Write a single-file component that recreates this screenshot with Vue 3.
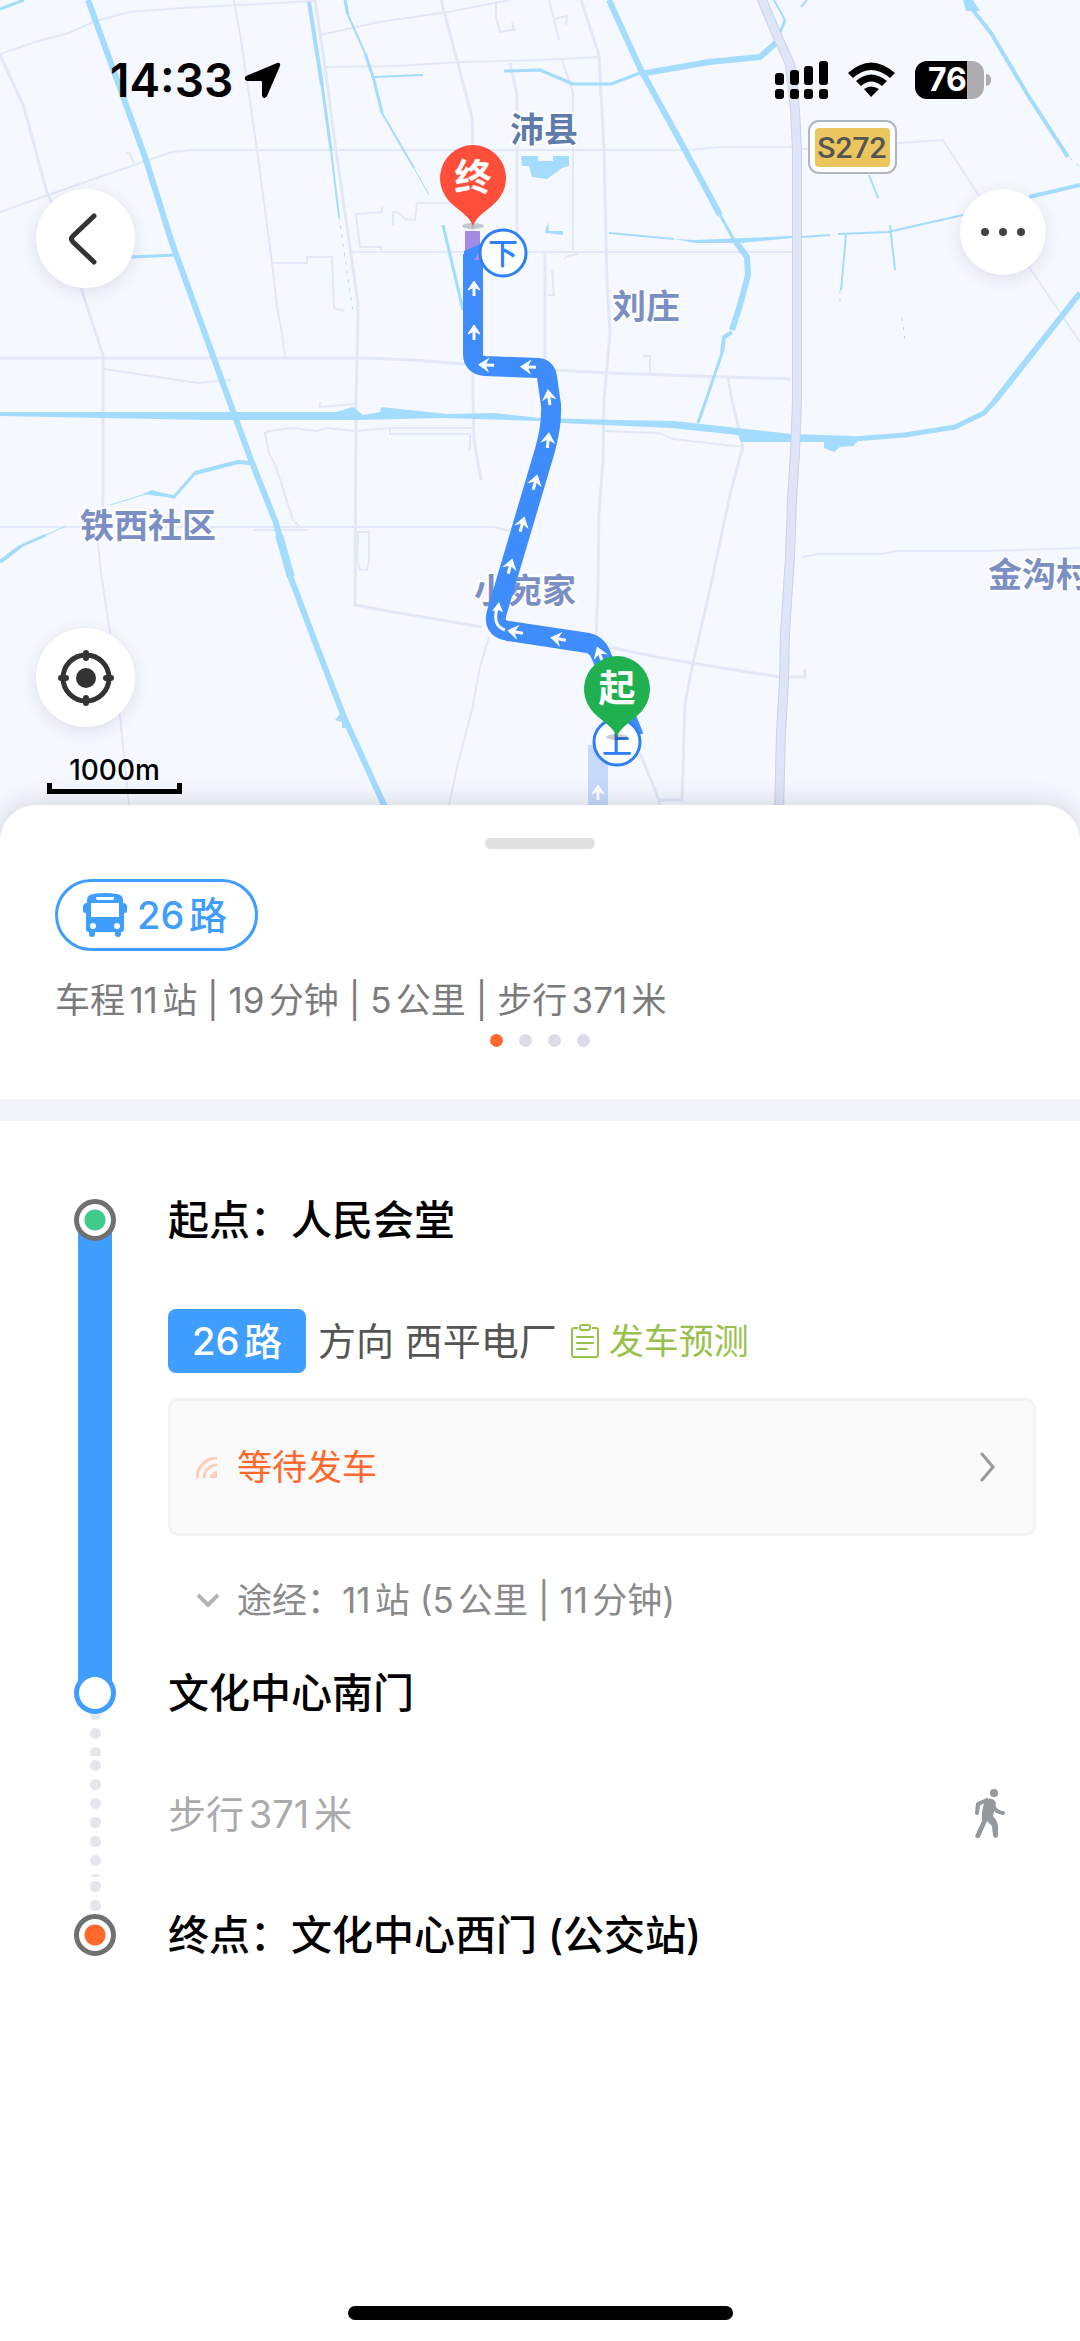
<script setup>
const roads = [
  'M0 54 38 41 69 33 93 22 129 12 182 8 241 5 315 1',
  'M0 212 48 195 134 165 172 152 193 150H688L719 147H792M802 149 898 143 943 140 977 193 1029 267 1080 342',
  'M234 0 241 40 257 150 272 263 277 307 282 333 285 358',
  'M320 35 379 22 448 12 510 0',
  'M325 67 396 66 461 62 540 60 600 57',
  'M351 252H792',
  'M393 225V212L399 213 405 219 415 220 417 203H455',
  'M382 207V212L356 214 360 247H381V250',
  'M272 263H307V257H332L334 308 344 311',
  'M104 369 198 383 231 380',
  'M126 153H129L134 163',
  'M496 3V17L500 32 514 30 512 22',
  'M562 60 573 93V250',
  'M549 0 554 20 559 40M554 19 567 16 566 25',
  'M643 356H650V375',
  'M602 431 659 433 673 439 743 447',
  'M803 557 819 554H881L898 551H988L1080 548',
  'M564 259 568 256 579 254M552 270 554 295H548',
  'M0 527H494L510 531M253 530H308',
  'M355 431 327 428 317 431 293 428 269 431 265 433 269 453 276 467 293 520 300 527',
  'M355 431 390 428H474M390 428V434H470V448L468 450',
  'M320 402V407L356 404',
  'M358 532H369V560L367 570H360L357 560Z',
  'M489 637 480 667 472 710 458 763 449 805V850',
  'M98 543 101 573 110 633 120 717 129 805V850',
]
const wideRoads = [
  'M0 55 24 107 47 193 52 203 81 288 103 355V467L103 500 98 543',
  'M0 358H365L413 360 465 364M555 370 609 373 726 377 791 379',
  'M315 0 325 67 336 150 358 303 358 320 356 400 356 428 355 605 399 613 441 620 482 627',
  'M441 0 455 53 472 117 473 150V400L474 440 481 480',
  'M510 63 517 95V251',
  'M581 0 599 55 604 150 607 283 610 333 604 400 603 460 599 510 598 593 596 637',
  'M545 252V360',
  'M728 378 732 400 743 447 731 490 712 580 693 663 685 703 682 800H659M640 753 659 800 664 850',
  'M609 647 657 657 692 663 747 672 781 677H805V669',
]
const water = [
  { w: 6, d: 'M88 0 145 157 172 243 229 400 251 460 276 523 289 573 317 647 344 717 384 805 400 850' },
  { w: 8, d: 'M279 535 291 577' },
  { w: 3, d: 'M0 9 24 0' },
  { w: 4, d: 'M309 2 322 85' },
  { w: 3, d: 'M322 85 331 150' },
  { w: 2, d: 'M331 150 339 217' },
  { w: 3, d: 'M345 0 348 15M365 53 374 80 382 113' },
  { w: 2, d: 'M348 15 365 53M374 77 423 75M382 113 414 168' },
  { w: 1, d: 'M414 168 429 195' },
  { w: 3, d: 'M131 257 177 255' },
  { w: 3, d: 'M443 225 463 310' },
  { w: 3, d: 'M504 71 540 70 573 84 611 84 640 73M776 43 785 20' },
  { w: 6, d: 'M640 74 709 62 760 57 776 43' },
  { w: 2, d: 'M785 20 774 0M807 0 801 7' },
  { w: 6, d: 'M609 0 640 68 685 150 720 215' },
  { w: 3, d: 'M720 215 734 240 746 257' },
  { w: 6, d: 'M736 242 747 257 748 275 740 305 732 330' },
  { w: 4, d: 'M732 332 724 337 722 353' },
  { w: 3, d: 'M722 353 706 400 698 423' },
  { w: 2, d: 'M609 233 674 239M802 237 830 235M838 234 888 232 963 215' },
  { w: 4, d: 'M1029 197 1080 185' },
  { w: 2, d: 'M846 235 841 290M890 225 895 270M869 175 878 198' },
  { w: 4, d: 'M965 0 991 33 1029 97 1068 157' },
  { w: 6, d: 'M1080 293 994 402' },
  { w: 5, d: 'M994 402 984 413 955 427 905 435 853 439' },
  { w: 4, d: 'M250 463 238 462 195 473M0 562 21 546' },
  { w: 3, d: 'M195 473 174 497 152 492M21 546 46 535' },
  { w: 1, d: 'M152 492 110 505M46 535 66 526' },
]
const lakes = [
  '521,156 538,156 538,161 553,161 553,156 569,156 569,166 562,168 547,179 532,177 529,166 522,166',
  '545,232 548,222 549,231 563,231 563,235 545,233',
  '343,710 335,720 342,722 342,728 352,728',
  '963,0 973,0 980,11 966,11',
  '674,239 695,240 792,236 792,238 740,243 695,243',
  '0,412 336,412 353,407 363,415 380,412 381,407 447,414 494,413 540,418 617,420 674,421 791,434 853,436 858,441 853,446 840,447 834,452 824,448 824,442 741,442 738,435 671,428 561,423 540,421 444,418 356,420 207,420 0,416',
  '174,498 150,495 143,494 152,490',
]
const places = [
  { name: '沛县', x: 510, y: 142, main: true },
  { name: '刘庄', x: 612, y: 319 },
  { name: '铁西社区', x: 80, y: 538 },
  { name: '小宛家', x: 474, y: 603 },
  { name: '金沟村', x: 988, y: 587 },
]
const arrows = [
  [474, 289, 0], [474, 333, 0], [487, 365, -88], [529, 367, -88], [549, 398, -8], [548, 441, 6],
  [535, 483, 15], [522, 525, 15], [510, 567, 15], [516, 632, -80], [559, 639, -80], [600, 655, -20], [598, 793, 0],
]
const pages = [0, 1, 2, 3]
</script>

<template>
  <main class="screen">
    <section class="map">
      <svg class="canvas" viewBox="0 0 1080 841" preserveAspectRatio="xMidYMin slice" aria-label="路线地图">
        <g class="road"><path v-for="d in roads" :key="d" :d="d" /></g>
        <g class="road wide"><path v-for="d in wideRoads" :key="d" :d="d" /></g>
        <g class="water">
          <path v-for="s in water" :key="s.d" :d="s.d" :stroke-width="s.w" />
          <path d="M339 217 353 312M902 318 905 340M840 290V302M1070 158 1080 167" stroke-dasharray="3 6" />
        </g>
        <polygon v-for="p in lakes" :key="p" class="lake" :points="p" />
        <path class="highway-edge" d="M760 -5 776 33 790 64 795 110 797 150V400L795 453 792 500 790 557 785 633 784 680 781 733 778 850" />
        <path class="highway" d="M760 -5 776 33 790 64 795 110 797 150V400L795 453 792 500 790 557 785 633 784 680 781 733 778 850" />

        <g class="sign">
          <rect x="809" y="121" width="87" height="52" rx="10" fill="#fff" stroke="#aeb6bf" stroke-width="2" />
          <rect x="815" y="128" width="75" height="39" rx="4" fill="#ebc65f" />
          <text x="852" y="158" text-anchor="middle">S272</text>
        </g>
        <text v-for="p in places" :key="p.name" class="place" :class="{ main: p.main }" :x="p.x" :y="p.y">{{ p.name }}</text>

        <path d="M598 745V850" stroke="#c5dafd" stroke-width="20" fill="none" />
        <rect x="465" y="231" width="15" height="24" fill="#a48ae6" />
        <path class="route" d="M473 254V354Q473 365 485 366L538 368Q546 369 547 377L551 405Q552 425 545 450L497 612Q492 628 508 631L588 643Q597 645 601 655L634 737" />
        <path d="M464 255V251L480 244 483 247V255Z" fill="#3f8cfd" />
        <path d="M480 250 482 260H474Z" fill="#a48ae6" />
        <g v-for="a in arrows" :key="a.join()" class="arrow" :transform="`translate(${a[0]} ${a[1]}) rotate(${a[2]})`">
          <path d="M0 7V-3" /><path class="head" d="M0 -8 6 1 0 -2 -6 1Z" />
        </g>
        <path class="bend" d="M505 630C496 627 494 619 497 608" />
        <path d="M499 602 503 612 498 610 492 611Z" fill="#fff" />

        <g class="stop">
          <circle cx="503" cy="253" r="23" /><text x="503" y="264">下</text>
          <circle cx="617" cy="742" r="23" /><text x="617" y="753">上</text>
        </g>
        <g class="pin">
          <ellipse cx="473" cy="226" rx="11" ry="3" />
          <path d="M473 226C469 214 453 208 446 197A33 33 0 1 1 500 197C493 208 477 214 473 226Z" fill="#ff4f3a" />
          <text x="473" y="191">终</text>
          <ellipse cx="617" cy="737" rx="11" ry="3" />
          <path d="M617 737C613 725 597 719 590 708A33 33 0 1 1 644 708C637 719 621 725 617 737Z" fill="#20b050" />
          <text x="617" y="702">起</text>
        </g>
      </svg>

      <div class="overlay">
        <div class="status">
          <time>14:33</time>
          <svg class="location" width="37" height="37" viewBox="0 0 37 37"><path d="M33 1Q37 0 36 4L23 34Q20 38 18 34V20Q18 19 17 19H3Q-1 17 2 14Z" /></svg>
          <svg class="signal" width="53" height="38" viewBox="0 0 53 38">
            <rect y="12" width="9" height="12" rx="3" /><rect x="15" y="9" width="9" height="15" rx="3" /><rect x="29" y="5" width="9" height="19" rx="3" /><rect x="44" width="9" height="24" rx="3" />
            <rect y="28" width="9" height="10" rx="3" /><rect x="15" y="28" width="9" height="10" rx="3" /><rect x="29" y="28" width="9" height="10" rx="3" /><rect x="44" y="28" width="9" height="10" rx="3" />
          </svg>
          <svg class="wifi" width="47" height="36" viewBox="0 0 47 36">
            <path d="M0 11Q23 -10 47 11L42 16Q23 0 5 16Z" /><path d="M8 19Q23 6 39 19L34 24Q23 15 13 24Z" /><path d="M16 27Q23 22 31 27L23 35Z" />
          </svg>
          <span class="battery"><span class="level">76</span></span>
          <span class="nub"></span>
        </div>

        <nav class="nav">
          <button class="round" type="button" aria-label="返回">
            <svg width="36" height="54" viewBox="0 0 36 54"><path d="M26 4 5 24Q2 27 5 30L26 50" fill="none" stroke="#333" stroke-width="5" stroke-linecap="round" /></svg>
          </button>
          <button class="round more" type="button" aria-label="更多">
            <svg width="46" height="10" viewBox="0 0 46 10" fill="#444"><circle cx="5" cy="5" r="4" /><circle cx="23" cy="5" r="4" /><circle cx="41" cy="5" r="4" /></svg>
          </button>
        </nav>

        <div class="tools">
          <button class="round" type="button" aria-label="定位">
            <svg width="56" height="56" viewBox="0 0 56 56">
              <circle cx="28" cy="28" r="23" fill="none" stroke="#333" stroke-width="5" /><circle cx="28" cy="28" r="10" fill="#333" />
              <path d="M28 3V8M28 48V53M3 28H8M48 28H53" stroke="#333" stroke-width="6" stroke-linecap="round" />
            </svg>
          </button>
          <div class="scale">1000m<span class="ruler"></span></div>
        </div>
      </div>
    </section>

    <section class="sheet">
      <header class="summary">
        <span class="handle"></span>
        <div class="pill">
          <svg width="44" height="44" viewBox="0 0 44 44">
            <path fill="#3f9eff" fill-rule="evenodd" d="M10 1Q22 -1 34 1Q40 2 40 7V10Q44 10 44 14V18Q44 20 41 20V36Q41 39 38 39V41Q38 44 35 44T32 41V39H12V41Q12 44 9 44T6 41V39Q3 39 3 36V20Q0 20 0 18V14Q0 10 4 10V7Q4 2 10 1ZM14 4Q13 4 13 5T14 7H30Q31 7 31 5T30 4ZM8 10V24H36V10ZM10 30A3 3 0 0 0 10 36A3 3 0 0 0 10 30ZM34 30A3 3 0 0 0 34 36A3 3 0 0 0 34 30Z" />
          </svg>
          <span>26路</span>
        </div>
        <p class="facts">车程11站 | 19分钟 | 5公里 | 步行371米</p>
        <div class="pages"><i v-for="p in pages" :key="p" :class="{ on: p === 0 }"></i></div>
      </header>

      <div class="steps">
        <div class="step start">
          <div class="rail"><span class="line half"></span><span class="node green"></span></div>
          <h2>起点：人民会堂</h2>
        </div>
        <div class="step ride">
          <div class="rail"><span class="line"></span></div>
          <div class="detail">
            <div class="direction">
              <span class="badge">26路</span>
              <span>方向 西平电厂</span>
              <button class="forecast" type="button">
                <svg width="28" height="34" viewBox="0 0 28 34" fill="none" stroke="#98c14c" stroke-width="2">
                  <path d="M7 4H3Q1 4 1 6V30Q1 33 3 33H25Q27 33 27 30V6Q27 4 25 4H21" /><rect x="9" y="1" width="10" height="5" rx="2" /><path d="M6 13H22M6 19H22M6 25H16" stroke-linecap="round" />
                </svg>
                发车预测
              </button>
            </div>
            <button class="waiting" type="button">
              <svg width="21" height="21" viewBox="0 0 21 21"><path d="M1 21A20 20 0 0 1 21 1M8 21A13 13 0 0 1 21 8" fill="none" stroke="#ffcdb9" stroke-width="3" /><path d="M14 21A7 7 0 0 1 21 14V21Z" fill="#ffcdb9" /></svg>
              <span>等待发车</span>
              <svg class="go" width="16" height="30" viewBox="0 0 16 30"><path d="M2 2 13 15 2 28" fill="none" stroke="#999" stroke-width="3" stroke-linecap="round" /></svg>
            </button>
            <button class="via" type="button">
              <svg width="22" height="14" viewBox="0 0 22 14"><path d="M1 2 11 12 21 2" fill="none" stroke="#b0b3b6" stroke-width="4" /></svg>
              途经：11站 (5公里 | 11分钟)
            </button>
          </div>
        </div>
        <div class="step stopover">
          <div class="rail"><span class="dots low"></span><span class="line upper"></span><span class="node blue"></span></div>
          <h2>文化中心南门</h2>
        </div>
        <div class="step walk">
          <div class="rail"><span class="dots"></span></div>
          <p>步行371米</p>
          <svg width="32" height="52" viewBox="0 0 32 52" fill="none" stroke="#94999d" stroke-linecap="round" stroke-linejoin="round">
            <circle cx="20" cy="5" r="4" fill="#94999d" stroke="none" />
            <path d="M13 12 4 16 3 25M20 19Q22 24 29 25" stroke-width="4" />
            <path d="M9 14Q18 7 22 15L19 28Q24 33 24 40V48Q22 52 19 48L18 38 13 33 6 49Q3 52 1 48L8 33V24L10 15Z" fill="#94999d" stroke="none" />
          </svg>
        </div>
        <div class="step finish">
          <div class="rail"><span class="dots high"></span><span class="node orange"></span></div>
          <h2>终点：文化中心西门 (公交站)</h2>
        </div>
      </div>
      <span class="home"></span>
    </section>
  </main>
</template>

<style>
body { margin: 0; background: #fff; }
</style>

<style scoped>
* { box-sizing: border-box; }
.screen { display: flex; flex-direction: column; min-height: 100vh; overflow: hidden; font-family: Inter, "Noto Sans CJK SC", sans-serif; text-autospace: normal; color: #000; }
button { border: 0; padding: 0; margin: 0; background: none; font: inherit; color: inherit; cursor: pointer; text-autospace: inherit; }
svg { display: block; flex: none; }
h2, p { margin: 0; }

.map { position: relative; width: 100%; aspect-ratio: 1080 / 841; background: #f6f8ff; }
.canvas { width: 100%; height: 100%; }
.road { fill: none; stroke: #e2e8f8; stroke-width: 2; }
.road.wide { stroke-width: 3; }
.water { fill: none; stroke: #a3dcff; stroke-linejoin: round; }
.lake { fill: #a3dcff; }
.highway-edge { fill: none; stroke: #cbd3e6; stroke-width: 10; }
.highway { fill: none; stroke: #dfe5f6; stroke-width: 8; }
.sign text { font: 500 30px Roboto, sans-serif; fill: #555; }
.place { font-size: 34px; font-weight: 700; fill: #7b8fc4; stroke: #fff; stroke-width: 4; stroke-linejoin: round; paint-order: stroke; }
.place.main { fill: #5f7bab; }
.route { fill: none; stroke: #3f8cfd; stroke-width: 20; stroke-linejoin: round; }
.arrow path { stroke: #fff; stroke-width: 3; fill: none; }
.arrow .head { fill: #fff; stroke-width: 1; }
.bend { fill: none; stroke: #fff; stroke-width: 3; }
.stop circle { fill: #fff; stroke: #2f80f7; stroke-width: 3; }
.stop text { font-size: 30px; font-weight: 500; fill: #2f80f7; text-anchor: middle; }
.pin ellipse { fill: #000; fill-opacity: .2; }
.pin text { font-size: 37px; font-weight: 700; fill: #fff; text-anchor: middle; }

.overlay { position: absolute; inset: 0; display: flex; flex-direction: column; }
.status { display: flex; align-items: center; height: 56px; margin: 52px 89px 0 110px; font-size: 46px; font-weight: 600; line-height: 56px; }
.location { margin-left: 11px; }
.signal { margin-left: auto; }
.wifi { margin-left: 20px; }
.battery { width: 69px; height: 38px; margin-left: 20px; border-radius: 12px; overflow: hidden; background: linear-gradient(90deg, #000 52px, #adadb1 52px); color: #fff; }
.level { display: block; padding-left: 13px; font-size: 32px; font-weight: 700; line-height: 38px; }
.nub { width: 5px; height: 12px; margin-left: 2px; border-radius: 0 6px 6px 0; background: #adadb1; }
.nav { display: flex; justify-content: space-between; align-items: flex-start; margin: 81px 34px 0 36px; }
.round { display: grid; place-items: center; width: 99px; height: 99px; border-radius: 50%; background: #fff; box-shadow: 0 4px 16px rgba(40, 50, 90, .12); }
.round.more { width: 86px; height: 86px; }
.tools { display: flex; flex-direction: column; gap: 30px; margin-top: auto; padding: 0 36px 47px; }
.scale { width: 135px; margin-left: 11px; text-align: center; font-size: 28px; font-weight: 500; line-height: 26px; }
.ruler { display: block; height: 11px; border: 5px solid #000; border-top: 0; }

.sheet { position: relative; z-index: 1; flex: 1; display: flex; flex-direction: column; margin-top: -36px; border-radius: 36px 36px 0 0; background: #fff; box-shadow: 0 0 28px rgba(30, 30, 60, .18); }
.summary { display: flex; flex-direction: column; align-items: flex-start; height: 316px; padding: 33px 55px 0; border-bottom: 22px solid #f3f4f9; }
.handle { align-self: center; width: 110px; height: 11px; border-radius: 6px; background: #e1e1e1; }
.pill { display: flex; align-items: center; gap: 10px; height: 72px; margin-top: 30px; padding: 0 28px 0 25px; border: 3px solid #3f9eff; border-radius: 36px; color: #3f9eff; font-size: 38px; font-weight: 500; line-height: 60px; }
.facts { margin-top: 25px; font-size: 35px; line-height: 48px; color: #7b7b7b; }
.pages { align-self: center; display: flex; gap: 16px; margin-top: 10px; }
.pages i { width: 13px; height: 13px; border-radius: 50%; background: #dbdbe6; }
.pages .on { background: #ff692e; }

.steps { padding: 39px 44px 0 56px; }
.step { display: flex; align-items: center; gap: 34px; }
.start { height: 120px; }
.stopover { height: 126px; }
.walk { height: 121px; }
.finish { height: 116px; }
.rail { align-self: stretch; flex: none; width: 78px; display: grid; justify-items: center; align-items: center; }
.rail > * { grid-area: 1 / 1; }
.line { width: 34px; height: 100%; background: #3f9eff; }
.half { height: 50%; align-self: end; }
.upper { height: 50%; align-self: start; }
.dots { width: 11px; height: 100%; background: radial-gradient(circle, #e4e8ed 5px, transparent 6px) 0 0 / 11px 19px; }
.dots.low { height: 57px; align-self: end; background-position-y: 6px; }
.dots.high { height: 38px; align-self: start; }
.node { width: 42px; height: 42px; border: 5px solid #707070; border-radius: 50%; background: #fff; }
.green { background: radial-gradient(circle, #3fcb8a 10px, #fff 11px); }
.orange { background: radial-gradient(circle, #ff692e 10px, #fff 11px); }
.blue { border-color: #3f9eff; }
h2 { font-size: 41px; font-weight: 500; line-height: 60px; }
.ride { align-items: stretch; }
.detail { flex: 1; min-width: 0; padding: 29px 0 6px; display: flex; flex-direction: column; align-items: stretch; }
.direction { display: flex; align-items: center; gap: 12px; height: 64px; font-size: 38px; line-height: 62px; color: #555; white-space: nowrap; }
.badge { padding: 0 24px; border-radius: 8px; background: #3f9eff; color: #fff; font-weight: 500; line-height: 64px; }
.forecast { display: flex; align-items: center; gap: 10px; margin-left: 2px; font-size: 35px; line-height: 48px; color: #98c14c; }
.waiting { display: flex; align-items: center; gap: 20px; height: 138px; margin-top: 25px; padding: 0 37px 0 25px; border: 3px solid #f3f3f3; border-radius: 10px; background: #fafafa; font-size: 35px; line-height: 48px; color: #ff692e; }
.go { margin-left: auto; }
.via { display: flex; align-items: center; align-self: flex-start; gap: 18px; margin-top: 40px; padding-left: 29px; font-size: 35px; line-height: 48px; color: #8a8a8a; }
.walk p { flex: 1; font-size: 38px; line-height: 48px; padding-bottom: 5px; color: #aaa; }
.walk svg { margin: 0 30px 5px 0; }
.home { align-self: center; width: 385px; height: 14px; margin: auto 0 21px; border-radius: 7px; background: #000; }
</style>
